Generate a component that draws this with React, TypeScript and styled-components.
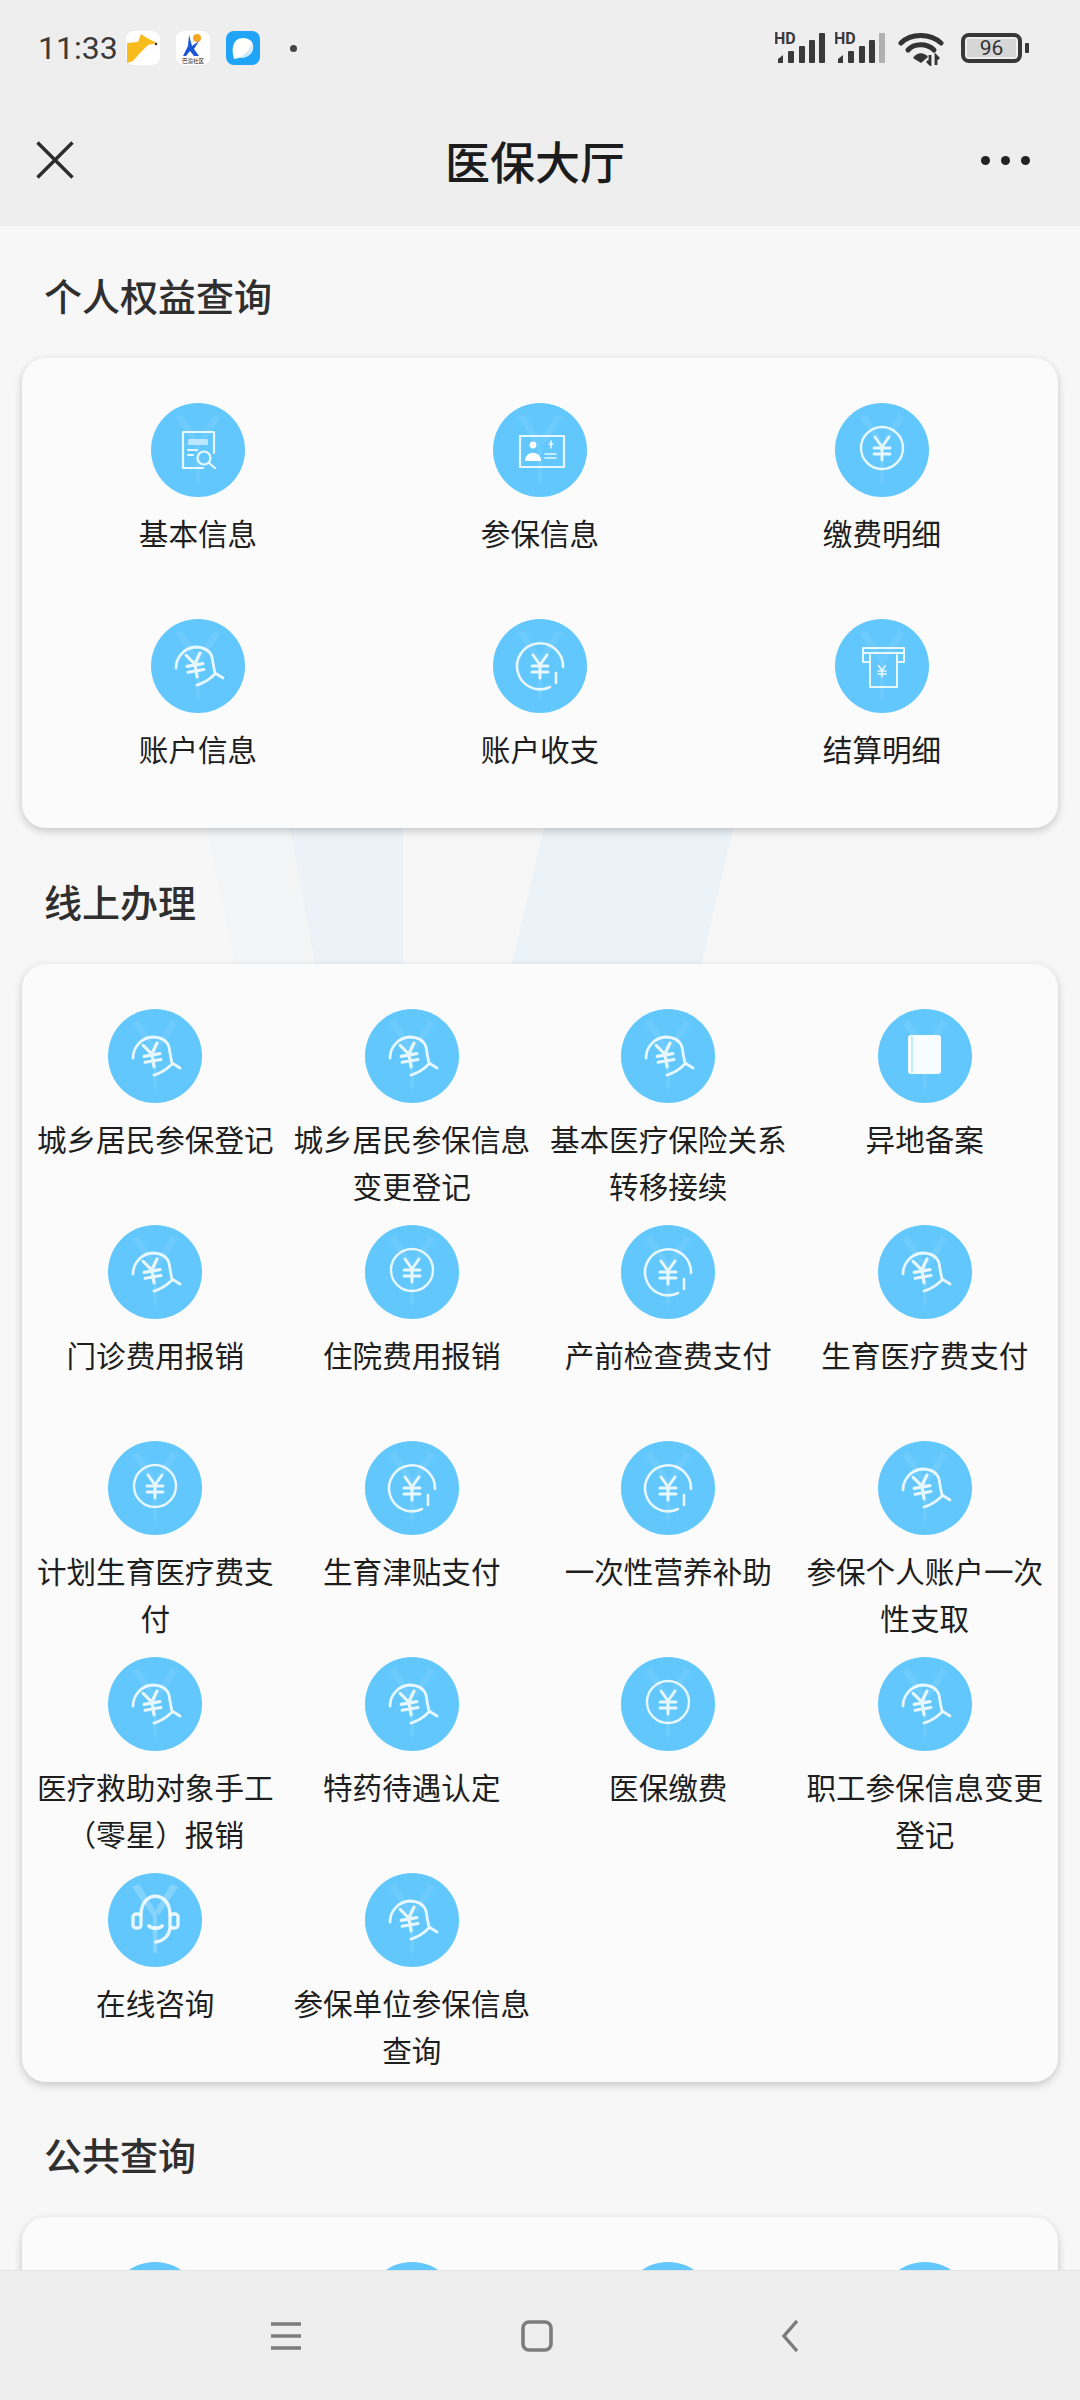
import React from 'react';
import { createGlobalStyle, styled } from 'styled-components';

type IconKind = 'doc' | 'card' | 'coin' | 'hand' | 'arrow' | 'atm' | 'book' | 'headset';

interface ServiceItem {
  label: string;
  icon: IconKind;
}

const personal: ServiceItem[] = [
  { label: '基本信息', icon: 'doc' },
  { label: '参保信息', icon: 'card' },
  { label: '缴费明细', icon: 'coin' },
  { label: '账户信息', icon: 'hand' },
  { label: '账户收支', icon: 'arrow' },
  { label: '结算明细', icon: 'atm' },
];

const online: ServiceItem[] = [
  { label: '城乡居民参保登记', icon: 'hand' },
  { label: '城乡居民参保信息变更登记', icon: 'hand' },
  { label: '基本医疗保险关系转移接续', icon: 'hand' },
  { label: '异地备案', icon: 'book' },
  { label: '门诊费用报销', icon: 'hand' },
  { label: '住院费用报销', icon: 'coin' },
  { label: '产前检查费支付', icon: 'arrow' },
  { label: '生育医疗费支付', icon: 'hand' },
  { label: '计划生育医疗费支付', icon: 'coin' },
  { label: '生育津贴支付', icon: 'arrow' },
  { label: '一次性营养补助', icon: 'arrow' },
  { label: '参保个人账户一次性支取', icon: 'hand' },
  { label: '医疗救助对象手工（零星）报销', icon: 'hand' },
  { label: '特药待遇认定', icon: 'hand' },
  { label: '医保缴费', icon: 'coin' },
  { label: '职工参保信息变更登记', icon: 'hand' },
  { label: '在线咨询', icon: 'headset' },
  { label: '参保单位参保信息查询', icon: 'hand' },
];

// only the tops of these circles show above the bottom bar
const publicQuery: IconKind[] = ['hand', 'hand', 'hand', 'hand'];

const Yen = ({ x, y, s = 1, tilt = 0 }: { x: number; y: number; s?: number; tilt?: number }) => (
  <g transform={`translate(${x} ${y}) rotate(${tilt}) scale(${s})`}>
    <path d="M-7 -11 L0 -1 L7 -11 M0 -1 V12 M-8 0 H8 M-8 6 H8" />
  </g>
);

const Glyph = ({ kind }: { kind: IconKind }) => {
  switch (kind) {
    case 'doc':
      return (
        <g>
          <path d="M52 65 H32 V29 H63 V50" />
          <rect x="37" y="36" width="20" height="6" fill="#fff" fillOpacity=".55" stroke="none" />
          <path d="M37 47 H46 M37 52 H42" />
          <circle cx="53" cy="55" r="6.5" />
          <path d="M58 60 L64 65" />
        </g>
      );
    case 'card':
      return (
        <g>
          <rect x="27" y="33" width="44" height="31" />
          <circle cx="40" cy="42" r="3.4" fill="#fff" stroke="none" />
          <path d="M32 58 C32 47 48 47 48 58 Z" fill="#fff" stroke="none" />
          <path d="M56 41 H60 M58 38 V45 M52 51 H63 M52 55 H63" strokeWidth="1.6" />
        </g>
      );
    case 'coin':
      return (
        <g strokeWidth="2.4">
          <circle cx="47" cy="45" r="21" />
          <g strokeWidth="2.8">
            <Yen x={47} y={45} />
          </g>
        </g>
      );
    case 'hand':
      return (
        <g strokeWidth="2.8">
          <path d="M25 49 A21 21 0 0 1 44 28 C53 28 59 32 61 38 C62 44 63 50 64 54 L72 59" />
          <path d="M46 66 C53 64 59 60 64 55" />
          <g strokeWidth="3.2">
            <Yen x={44} y={46} tilt={-10} />
          </g>
        </g>
      );
    case 'arrow':
      return (
        <g strokeWidth="2.6">
          <path d="M70 48 A23 23 0 1 0 57 68" />
          <path d="M63 54 V64" />
          <g strokeWidth="3">
            <Yen x={47} y={47} />
          </g>
        </g>
      );
    case 'atm':
      return (
        <g strokeWidth="2">
          <path d="M28 43 V29 H69 V43 M28 34 H69 M28 43 H34 M63 43 H69" />
          <path d="M35 36 V68 H62 V36" />
          <g strokeWidth="3">
            <Yen x={47} y={52} s={0.5} />
          </g>
        </g>
      );
    case 'book':
      return (
        <g stroke="none">
          <rect x="30" y="26" width="33" height="39" rx="3" fill="#fff" fillOpacity=".95" />
          <rect x="33" y="27" width="2" height="37" fill="#c4ebff" />
        </g>
      );
    case 'headset':
      return (
        <g strokeWidth="3.4">
          <path d="M33 42 C33 17 62 17 62 42" />
          <rect x="25" y="41" width="8" height="14" rx="3" />
          <rect x="62" y="41" width="8" height="14" rx="3" />
          <path d="M62 55 C61 63 55 68 48 69" />
          <path d="M41 53 C44 56 51 56 54 53" strokeWidth="3.8" />
        </g>
      );
  }
};

const ServiceIcon = ({ kind }: { kind: IconKind }) => (
  <IconSvg viewBox="0 0 94 94">
    <circle cx="47" cy="47" r="47" fill="#62c7fd" />
    <path
      d="M24 14 L31 11 L49 40 V80 H45 V44 Z M70 14 L63 11 L47 38 L51 42 Z"
      fill="#fff"
      fillOpacity={kind === 'headset' ? 0.22 : 0.07}
    />
    <g fill="none" stroke="#fff" strokeWidth="2.2" strokeOpacity=".85" strokeLinecap="round" strokeLinejoin="round">
      <Glyph kind={kind} />
    </g>
  </IconSvg>
);

const Service = ({ item }: { item: ServiceItem }) => (
  <ServiceCell>
    <ServiceIcon kind={item.icon} />
    <ServiceLabel>{item.label}</ServiceLabel>
  </ServiceCell>
);

const SignalIcon = ({ faded }: { faded?: boolean }) => (
  <svg width="50" height="32" viewBox="0 0 50 32">
    <text x="-1" y="12" fontSize="16" fontWeight="700" fontFamily="Roboto, sans-serif" fill="#3a3a3a">
      HD
    </text>
    <g fill="#3a3a3a">
      <path d="M3 27 L8 23 V31 H3 Z" />
      <rect x="13" y="19" width="6" height="12" rx="1" />
      <rect x="24" y="14" width="6" height="17" rx="1" />
      <rect x="34" y="8" width="6" height="23" rx="1" />
      <rect x="44" y="1" width="6" height="30" rx="1" fill={faded ? '#b0b0b0' : '#3a3a3a'} />
    </g>
  </svg>
);

const WifiIcon = () => (
  <svg width="46" height="34" viewBox="0 0 46 34">
    <g fill="none" stroke="#333" strokeWidth="5" strokeLinecap="round">
      <path d="M3 11 C13 1 32 1 43 11" />
      <path d="M10 18 C16 11 29 11 36 18" />
    </g>
    <path d="M15 26 C19 20 26 20 30 25 L23 31 Z" fill="#333" />
    <path d="M32 23 V32 L29 29 M38 33 V24 L41 27" fill="none" stroke="#333" strokeWidth="2.8" />
  </svg>
);

const GiraffeLogo = () => (
  <svg width="34" height="34" viewBox="0 0 34 34">
    <rect width="34" height="34" rx="8" fill="#fff" />
    <path d="M1 12 L12 11 L15 3 L21 7 L31 12 L22 14 L14 22 L7 30 L1 32 Z" fill="#f7bb1c" />
    <circle cx="30" cy="13" r="1.3" fill="#333" />
  </svg>
);

const RunnerLogo = () => (
  <svg width="34" height="34" viewBox="0 0 34 34">
    <rect width="34" height="34" rx="8" fill="#fff" />
    <circle cx="21" cy="7" r="4" fill="#f5a623" />
    <path d="M13 4 L16 15 L23 10 L18 18 L23 25 H18 L14 20 L10 25 H7 L12 15 Z" fill="#1a56d6" />
    <text x="17" y="32" textAnchor="middle" fontSize="5.5" fontFamily="'Noto Sans CJK SC', sans-serif" fill="#222">
      巴渝社区
    </text>
  </svg>
);

const BubbleLogo = () => (
  <svg width="34" height="34" viewBox="0 0 34 34">
    <rect width="34" height="34" rx="8" fill="#1fa4f7" />
    <path d="M17 7 C25 7 28 12 27 18 C26 24 20 27 13 27 L8 28 C7 22 6 20 7 16 C8 10 12 7 17 7 Z" fill="#fff" />
    <path d="M9 27 C17 26 23 21 26 12 C28 19 25 27 13 27 Z" fill="#cdeafd" />
  </svg>
);

export default function App() {
  return (
    <Screen>
      <GlobalStyle />
      <TopArea>
        <StatusBar>
          <StatusLeft>
            <Clock>11:33</Clock>
            <NoticeIcons>
              <GiraffeLogo />
              <RunnerLogo />
              <BubbleLogo />
            </NoticeIcons>
            <MoreDot />
          </StatusLeft>
          <StatusRight>
            <SignalIcon />
            <SignalIcon faded />
            <WifiIcon />
            <Battery>
              <BatteryBody>
                <BatteryLevel>96</BatteryLevel>
              </BatteryBody>
              <BatteryCap />
            </Battery>
          </StatusRight>
        </StatusBar>
        <NavBar>
          <svg width="38" height="38" viewBox="0 0 38 38">
            <path d="M1.5 1.5 L36.5 36.5 M36.5 1.5 L1.5 36.5" stroke="#2c2c2c" strokeWidth="3.4" fill="none" />
          </svg>
          <NavTitle>医保大厅</NavTitle>
          <MoreButton>
            <i />
            <i />
            <i />
          </MoreButton>
        </NavBar>
      </TopArea>
      <Content>
        <Watermark viewBox="0 0 1080 400" aria-hidden="true">
          <path d="M207 0 H403 V160 H241 Z" fill="#ecf2f8" />
          <path d="M207 0 H290 L320 160 H241 Z" fill="#f3f5f6" />
          <path d="M544 0 H733 L696 160 H506 Z" fill="#ebf2f8" />
        </Watermark>
        <Section>
          <SectionTitle>个人权益查询</SectionTitle>
          <Card $columns={3}>
            {personal.map((item) => (
              <Service key={item.label} item={item} />
            ))}
          </Card>
        </Section>
        <Section>
          <SectionTitle>线上办理</SectionTitle>
          <Card $columns={4}>
            {online.map((item) => (
              <Service key={item.label} item={item} />
            ))}
          </Card>
        </Section>
        <Section>
          <SectionTitle>公共查询</SectionTitle>
          <Card $columns={4}>
            {publicQuery.map((icon, i) => (
              <ServiceCell key={i}>
                <ServiceIcon kind={icon} />
              </ServiceCell>
            ))}
          </Card>
        </Section>
      </Content>
      <BottomBar>
        <svg width="30" height="28" viewBox="0 0 30 28">
          <path d="M0 2 H30 M0 14 H30 M0 26 H30" stroke="#7c7c7c" strokeWidth="3.6" />
        </svg>
        <svg width="32" height="32" viewBox="0 0 32 32">
          <rect x="2" y="2" width="28" height="28" rx="6" fill="none" stroke="#7c7c7c" strokeWidth="3.6" />
        </svg>
        <svg width="18" height="32" viewBox="0 0 18 32">
          <path d="M16 1 L3 16 L16 31" fill="none" stroke="#7c7c7c" strokeWidth="3.4" />
        </svg>
      </BottomBar>
    </Screen>
  );
}

const GlobalStyle = createGlobalStyle`
  * {
    box-sizing: border-box;
  }
  html, body {
    margin: 0;
    padding: 0;
    background: #f7f7f7;
  }
  body {
    font-family: "Noto Sans CJK SC", Roboto, sans-serif;
  }
`;

const Screen = styled.div`
  width: 1080px;
  height: 2400px;
  display: flex;
  flex-direction: column;
  overflow: hidden;
  background: #f7f7f7;
`;

const TopArea = styled.header`
  flex: none;
  height: 226px;
  background: #eeeeee;
`;

const StatusBar = styled.div`
  height: 96px;
  padding: 0 51px 0 38px;
  display: flex;
  align-items: center;
  justify-content: space-between;
`;

const StatusLeft = styled.div`
  display: flex;
  align-items: center;
`;

const Clock = styled.span`
  font-family: Roboto, sans-serif;
  font-size: 32px;
  color: #3a3a3a;
  width: 88px;
`;

const NoticeIcons = styled.div`
  display: flex;
  gap: 16px;
  svg {
    display: block;
  }
`;

const MoreDot = styled.span`
  width: 7px;
  height: 7px;
  border-radius: 50%;
  background: #444;
  margin-left: 30px;
`;

const StatusRight = styled.div`
  display: flex;
  align-items: center;
  gap: 10px;
  svg {
    display: block;
  }
  svg:nth-child(3) {
    margin: 2px 7px 0 3px;
  }
`;

const Battery = styled.div`
  display: flex;
  align-items: center;
  gap: 3px;
`;

const BatteryBody = styled.div`
  width: 61px;
  height: 30px;
  border: 4px solid #383838;
  border-radius: 8px;
  padding: 2px;
  display: flex;
`;

const BatteryLevel = styled.div`
  flex: 1;
  background: #d6d6d6;
  font-family: Roboto, sans-serif;
  font-size: 21px;
  line-height: 18px;
  text-align: center;
  color: #333;
`;

const BatteryCap = styled.div`
  width: 4px;
  height: 10px;
  border-radius: 1px;
  background: #383838;
`;

const NavBar = styled.nav`
  height: 130px;
  padding: 0 50px 0 36px;
  display: grid;
  grid-template-columns: 1fr auto 1fr;
  align-items: center;
  margin-top: -1px;
`;

const NavTitle = styled.h1`
  margin: 0;
  font-size: 45px;
  font-weight: 500;
  color: #1c1c1c;
  position: relative;
  left: 2px;
`;

const MoreButton = styled.div`
  justify-self: end;
  display: flex;
  gap: 11px;
  i {
    width: 9px;
    height: 9px;
    border-radius: 50%;
    background: #222;
  }
`;

const Content = styled.main`
  flex: 1;
  min-height: 0;
  overflow: hidden;
  position: relative;
`;

const Watermark = styled.svg`
  position: absolute;
  left: 0;
  top: 602px;
  width: 1080px;
  height: 400px;
`;

const Section = styled.section`
  position: relative;
  padding: 0 22px;
  & + & {
    margin-top: 3.5px;
  }
`;

const SectionTitle = styled.h2`
  margin: 0;
  padding: 47px 0 41px 22px;
  font-size: 38px;
  line-height: 44px;
  font-weight: 500;
  color: #2f2f2f;
`;

const Card = styled.div<{ $columns: number }>`
  display: grid;
  grid-template-columns: repeat(${(p) => p.$columns}, 1fr);
  padding: 19px 5px;
  border-radius: 24px;
  background: #fbfbfb;
  box-shadow: 0 3px 9px rgba(0, 0, 0, 0.2);
`;

const ServiceCell = styled.div`
  height: 216px;
  padding-top: 26px;
  display: flex;
  flex-direction: column;
  align-items: center;
  text-align: center;
`;

const IconSvg = styled.svg`
  flex: none;
  display: block;
  width: 94px;
  height: 94px;
  filter: blur(0.5px);
`;

const ServiceLabel = styled.div`
  margin-top: 12px;
  width: 100%;
  font-size: 29.6px;
  line-height: 47px;
  color: #1e1e1e;
`;

const BottomBar = styled.footer`
  flex: none;
  position: relative;
  height: 130px;
  padding: 0 281px 0 271px;
  display: flex;
  align-items: center;
  justify-content: space-between;
  background: #eeeeee;
  border-top: 1px solid #e4e4e4;
  svg:nth-child(2) {
    margin-right: 8px;
  }
`;
